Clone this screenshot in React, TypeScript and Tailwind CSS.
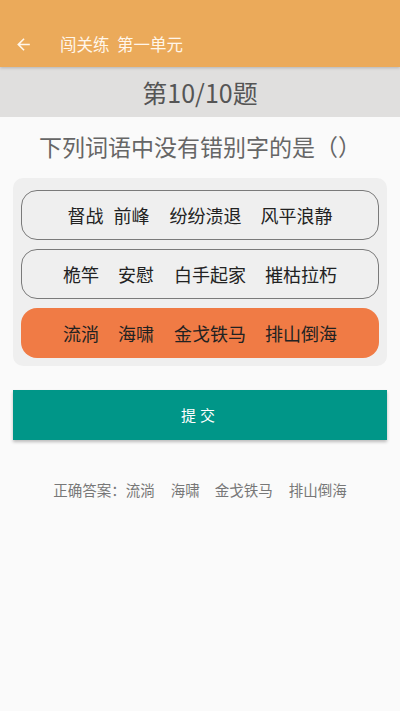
import React from "react";

const font = { fontFamily: '"Noto Sans CJK SC", "Noto Sans", sans-serif' };

function Words({ words, gaps }: { words: string[]; gaps: number[] }) {
  return (
    <>
      {words.map((w, i) => (
        <span key={i} style={i > 0 ? { marginLeft: gaps[i - 1] } : undefined}>
          {w}
        </span>
      ))}
    </>
  );
}

export default function App() {
  const options = [
    { words: ["督战", "前峰", "纷纷溃退", "风平浪静"], gaps: [10, 20, 19], selected: false },
    { words: ["桅竿", "安慰", "白手起家", "摧枯拉朽"], gaps: [19, 20, 19], selected: false },
    { words: ["流淌", "海啸", "金戈铁马", "排山倒海"], gaps: [19, 20, 19], selected: true },
  ];
  return (
    <div className="w-[400px] h-[711px] bg-[#fafafa] flex flex-col" style={font}>
      <div className="h-[67px] bg-[#ebaa5a] flex items-end pb-[11px] shadow-[0_1px_3px_rgba(0,0,0,0.2)] relative z-10">
        <div className="h-[24px] flex items-center">
          <svg width="19" height="19" viewBox="0 0 24 24" className="ml-[14px]">
            <path d="M20 11H7.83l5.59-5.59L12 4l-8 8 8 8 1.41-1.41L7.83 13H20v-2z" fill="#fff6ea" />
          </svg>
          <div className="ml-[27px] text-[16.5px] text-[#fff6ea] leading-[24px] whitespace-pre">闯关练  第一单元</div>
        </div>
      </div>
      <div className="h-[50px] bg-[#e0dfde] flex items-center justify-center text-[25px] text-[#555] leading-none">
        第10/10题
      </div>
      <div className="mt-[15px] text-center text-[23px] text-[#666] leading-[28px]">下列词语中没有错别字的是（）</div>
      <div className="mx-[13px] mt-[18px] bg-[#efefef] rounded-[10px] px-[8px] pt-[12px] pb-[8px] flex flex-col gap-[9px]">
        {options.map((o, i) => (
          <div
            key={i}
            className={
              o.selected
                ? "h-[50px] rounded-[16px] bg-[#f07b45] flex items-center justify-center text-[18px] text-[#222] whitespace-pre"
                : "h-[50px] rounded-[16px] border-[1.5px] border-[#7a7a7a] flex items-center justify-center text-[18px] text-[#222] whitespace-pre"
            }
          >
            <Words words={o.words} gaps={o.gaps} />
          </div>
        ))}
      </div>
      <div className="mx-[13px] mt-[24px] h-[50px] bg-[#009688] flex items-center justify-center text-white text-[15px] tracking-[4px] shadow-[0_2px_3px_rgba(0,0,0,0.25)]">
        提交
      </div>
      <div className="mt-[38px] flex justify-center text-[14.5px] text-[#777] leading-[24px]">
        <span>正确答案：</span>
        <Words words={["流淌", "海啸", "金戈铁马", "排山倒海"]} gaps={[16, 15, 16]} />
      </div>
    </div>
  );
}
